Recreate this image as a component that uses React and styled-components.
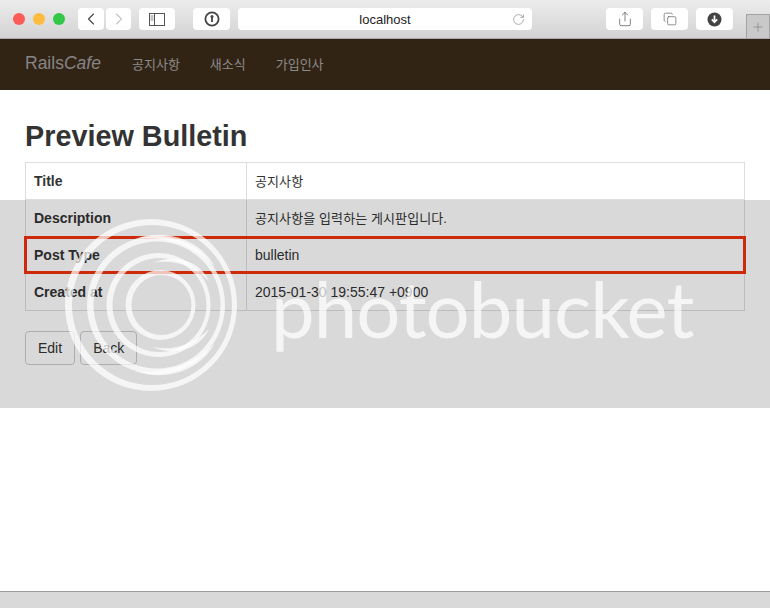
import React from 'react';
import styled, { createGlobalStyle } from 'styled-components';
import { ChevronLeft, ChevronRight, RotateCw, Share, Copy, Plus } from 'lucide-react';

const SANS = `"Liberation Sans", "Noto Sans CJK KR", sans-serif`;

const rows = [
  { label: 'Title', value: '공지사항', korean: true },
  { label: 'Description', value: '공지사항을 입력하는 게시판입니다.', korean: true },
  { label: 'Post Type', value: 'bulletin' },
  { label: 'Created at', value: '2015-01-30 19:55:47 +0900' },
];

// crescent: outer circle with a hole pushed to the right, thick on the left
const circle = (cx, cy, r) =>
  `M${cx - r} ${cy}a${r} ${r} 0 1 0 ${r * 2} 0a${r} ${r} 0 1 0 ${-r * 2} 0Z`;

const rings = [
  { cx: 86, cy: 86, r: 86, hole: 80, shift: 1 },
  { cx: 91, cy: 86, r: 69, hole: 63.5, shift: 1 },
  { cx: 93.5, cy: 86, r: 52, hole: 47, shift: 1 },
  { cx: 95.5, cy: 86, r: 35, hole: 30, shift: 1 },
];

const App = () => (
  <Page>
    <GlobalStyle />
    <Toolbar>
      <Lights>
        <Light $color="#fc5b57" />
        <Light $color="#fdbc40" />
        <Light $color="#33c748" />
      </Lights>
      <ToolButton $width={26} $left={13}>
        <ChevronLeft size={20} strokeWidth={1.3} color="#444" />
      </ToolButton>
      <ToolButton $width={25} $left={2}>
        <ChevronRight size={20} strokeWidth={1.3} color="#c4c4c4" />
      </ToolButton>
      <ToolButton $width={36} $left={8}>
        <svg width="16" height="13" viewBox="0 0 16 13">
          <rect x="0.5" y="0.5" width="15" height="12" fill="none" stroke="#555" />
          <path d="M5.5 0.5v12" stroke="#555" />
          <path d="M1.5 3h3M1.5 5h3M1.5 7h3" stroke="#888" />
        </svg>
      </ToolButton>
      <ToolButton $width={37} $left={18}>
        <svg width="16" height="16" viewBox="0 0 16 16">
          <circle cx="8" cy="8" r="6.6" fill="none" stroke="#444" strokeWidth="1.8" />
          <circle cx="8" cy="5.6" r="1.5" fill="#444" />
          <rect x="7.1" y="6" width="1.8" height="5" fill="#444" />
        </svg>
      </ToolButton>
      <Address>
        localhost
        <Reload>
          <RotateCw size={13} strokeWidth={1.1} color="#777" />
        </Reload>
      </Address>
      <ToolButton $width={37} $left={74}>
        <Share size={16} strokeWidth={1.1} color="#555" />
      </ToolButton>
      <ToolButton $width={37} $left={8}>
        <Copy size={14} strokeWidth={1.1} color="#555" />
      </ToolButton>
      <ToolButton $width={37} $left={8}>
        <svg width="15" height="15" viewBox="0 0 15 15">
          <circle cx="7.5" cy="7.5" r="7" fill="#444" />
          <path d="M7.5 3.6v6M4.8 7.4l2.7 2.8 2.7-2.8" fill="none" stroke="#fff" strokeWidth="1.7" />
        </svg>
      </ToolButton>
      <NewTab>
        <Plus size={14} strokeWidth={1} color="#777" />
      </NewTab>
    </Toolbar>

    <Navbar>
      <Brand>
        Rails<em>Cafe</em>
      </Brand>
      <NavLink>공지사항</NavLink>
      <NavLink>새소식</NavLink>
      <NavLink>가입인사</NavLink>
    </Navbar>

    <Content>
      <Heading>Preview Bulletin</Heading>
      <Table>
        <tbody>
          {rows.map((row) => (
            <tr key={row.label}>
              <LabelCell>{row.label}</LabelCell>
              <ValueCell $korean={row.korean}>{row.value}</ValueCell>
            </tr>
          ))}
        </tbody>
      </Table>
      <Actions>
        <Button>Edit</Button>
        <Button>Back</Button>
      </Actions>
    </Content>

    <BottomBar />

    <Band />
    <Highlight />

    <Logo width="174" height="174" viewBox="0 0 174 174">
      {rings.map((ring) => (
        <path
          key={ring.r}
          fillRule="evenodd"
          d={`${circle(ring.cx, ring.cy, ring.r)}${circle(ring.cx + ring.shift, ring.cy, ring.hole)}`}
        />
      ))}
      <path d="M70 20C100 9 135 20 150 48C132 28 100 16 70 20Z" />
      <path d="M88 44C110 34 135 42 144 62C128 46 108 40 88 44Z" />
      <path d="M70 152C100 163 135 152 150 124C132 144 100 156 70 152Z" />
      <path d="M88 128C110 138 135 130 144 110C128 126 108 132 88 128Z" />
    </Logo>
    <WatermarkText>photobucket</WatermarkText>
  </Page>
);

export default App;

const GlobalStyle = createGlobalStyle`
  html, body {
    margin: 0;
    padding: 0;
    background: #fff;
  }
`;

const Page = styled.div`
  position: relative;
  display: flex;
  flex-direction: column;
  width: 770px;
  height: 608px;
  overflow: hidden;
  font-family: ${SANS};
  color: #333;
`;

const Toolbar = styled.header`
  position: relative;
  display: flex;
  align-items: flex-start;
  flex: none;
  height: 39px;
  box-sizing: border-box;
  padding: 8px 0 0 13px;
  background: linear-gradient(#ececec, #d3d3d3);
  border-bottom: 1px solid #a9a9a9;
`;

const Lights = styled.div`
  display: flex;
  gap: 8px;
  padding-top: 5px;
`;

const Light = styled.span`
  width: 12px;
  height: 12px;
  border-radius: 50%;
  background: ${(p) => p.$color};
`;

const ToolButton = styled.div`
  display: flex;
  align-items: center;
  justify-content: center;
  flex: none;
  width: ${(p) => p.$width}px;
  height: 22px;
  margin-left: ${(p) => p.$left}px;
  background: #fff;
  border-radius: 4px;
`;

const Address = styled.div`
  position: relative;
  flex: none;
  width: 294px;
  height: 22px;
  margin-left: 8px;
  background: #fff;
  border-radius: 4px;
  font-size: 13px;
  line-height: 23px;
  text-align: center;
  color: #222;
`;

const Reload = styled.span`
  position: absolute;
  top: 5px;
  right: 7px;
  line-height: 0;
`;

const NewTab = styled.div`
  position: absolute;
  top: 14px;
  left: 746px;
  display: flex;
  align-items: center;
  justify-content: center;
  width: 24px;
  height: 24px;
  box-sizing: border-box;
  background: #c9c9c9;
  border: 1px solid #a4a4a4;
  border-bottom: none;
`;

const Navbar = styled.nav`
  display: flex;
  align-items: center;
  flex: none;
  height: 51px;
  box-sizing: border-box;
  padding: 0 0 2px 25px;
  background: #322415;
  color: #8b8b8b;
`;

const Brand = styled.div`
  width: 107px;
  font-size: 17.5px;
  color: #858585;

  em {
    font-style: italic;
  }
`;

const NavLink = styled.a`
  margin-right: 30px;
  font-size: 13px;
`;

const Content = styled.main`
  flex: 1;
  padding: 0 25px;
`;

const Heading = styled.h1`
  margin: 30px 0 9px;
  font-size: 28.8px;
  line-height: 33px;
  font-weight: 700;
  color: #333;
`;

const Table = styled.table`
  width: 720px;
  table-layout: fixed;
  border-collapse: collapse;
  font-size: 14px;
`;

const LabelCell = styled.th`
  width: 221px;
  height: 37px;
  box-sizing: border-box;
  padding: 0 8px;
  border: 1px solid #ddd;
  text-align: left;
  font-weight: 700;
`;

const ValueCell = styled.td`
  height: 37px;
  box-sizing: border-box;
  padding: 0 8px ${(p) => (p.$korean ? 2 : 0)}px;
  border: 1px solid #ddd;
  font-size: ${(p) => (p.$korean ? 13 : 14)}px;
  letter-spacing: ${(p) => (p.$korean ? 0.1 : 0)}px;
`;

const Actions = styled.div`
  display: flex;
  gap: 5px;
  margin-top: 20px;
`;

const Button = styled.button`
  height: 34px;
  padding: 0 12px;
  background: #fff;
  border: 1px solid #ccc;
  border-radius: 4px;
  font-family: ${SANS};
  font-size: 14px;
  color: #333;
`;

const BottomBar = styled.footer`
  flex: none;
  height: 17px;
  box-sizing: border-box;
  background: #d9d9d9;
  border-top: 1px solid #9c9c9c;
`;

const Band = styled.div`
  position: absolute;
  top: 200px;
  left: 0;
  width: 100%;
  height: 208px;
  background: rgba(0, 0, 0, 0.15);
`;

const Highlight = styled.div`
  position: absolute;
  top: 236px;
  left: 24px;
  width: 722px;
  height: 38px;
  box-sizing: border-box;
  border: 3px solid #cc2a0a;
`;

const Logo = styled.svg`
  position: absolute;
  top: 219px;
  left: 65px;
  fill: rgba(255, 255, 255, 0.72);
`;

const WatermarkText = styled.div`
  position: absolute;
  top: 261px;
  left: 271px;
  font-family: Lato, sans-serif;
  font-size: 78px;
  font-weight: 400;
  letter-spacing: -1px;
  line-height: 94px;
  color: rgba(255, 255, 255, 0.72);
`;
